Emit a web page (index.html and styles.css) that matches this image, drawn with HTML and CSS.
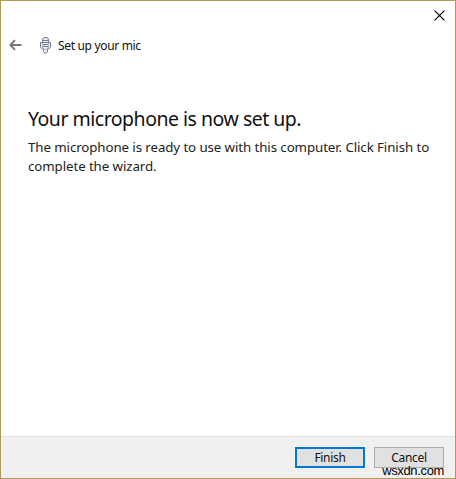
FILE: index.html
```html
<!DOCTYPE html>
<html lang="en">
<head>
<meta charset="utf-8">
<title>Set up your mic</title>
<link rel="stylesheet" href="styles.css">
</head>
<body>
<div class="window">
  <div class="titlebar">
    <svg class="close" width="11" height="11" viewBox="0 0 11 11"><path d="M.6.6l9.8 9.8M10.4.6L.6 10.4"/></svg>
  </div>
  <header class="header">
    <svg class="back" width="13" height="12" viewBox="0 0 13 12"><path d="M12.5 6H1.5M6 1.2L1.3 6L6 10.8"/></svg>
    <svg class="mic" width="11" height="17" viewBox="0 0 11 17">
      <rect x="2.5" y=".5" width="6" height="12" rx="2.5"/>
      <path d="M3 3.5h5M3 5.5h5M3 7.5h5M3 9.5h5M2.5 5.5h-2v4.5l2 2.5M8.5 5.5h2v4.5l-2 2.5M3.5 12.5v2l1 1.5h2l1-1.5v-2"/>
    </svg>
    <span class="title">Set up your mic</span>
  </header>
  <main class="content">
    <h1 class="heading">Your microphone is now set up.</h1>
    <p class="text">The microphone is ready to use with this computer. Click Finish to<br>complete the wizard.</p>
  </main>
  <footer class="footer">
    <button class="button primary">Finish</button>
    <button class="button">Cancel</button>
  </footer>
  <div class="watermark">wsxdn.com</div>
</div>
</body>
</html>
```
FILE: styles.css
```css
* { box-sizing: border-box; }
body { margin: 0; font-family: "Noto Sans", "Open Sans", sans-serif; color: #111; }
.window {
  position: relative;
  display: flex;
  flex-direction: column;
  height: 479px;
  border: 1px solid #b29a52;
  background: #fff;
}
.titlebar { display: flex; justify-content: flex-end; height: 30px; padding: 9px 10px 0 0; }
.close { stroke: #000; stroke-width: 1.2; fill: none; }
.header { display: flex; align-items: center; height: 28px; padding-left: 8px; }
.back { stroke: #777; stroke-width: 1.9; fill: none; }
.mic { margin-left: 18px; stroke: #747a90; stroke-width: 1; fill: #f0f1f6; }
.title { margin: 2px 0 0 7px; font-size: 12px; line-height: 16px; white-space: nowrap; letter-spacing: -.33px; }
.content { flex: 1; padding: 46px 0 0 27px; white-space: nowrap; }
.heading { margin: 0; font-size: 19.5px; line-height: 28px; font-weight: 400; letter-spacing: -.5px; }
.text { margin: 5px 0 0; font-size: 13.3px; line-height: 19px; letter-spacing: -.09px; color: #222; }
.footer {
  display: flex;
  justify-content: flex-end;
  gap: 9px;
  height: 42px;
  padding: 10px 11px 0 0;
  border-top: 1px solid #dfdfdf;
  background: #f0f0f0;
}
.button {
  width: 70px;
  height: 21px;
  padding: 0;
  border: 1px solid #adadad;
  background: #e1e1e1;
  color: #111;
  font: 12px/17px "Noto Sans", "Open Sans", sans-serif;
  letter-spacing: -.3px;
}
.primary { border: 2px solid #0078d7; }
.watermark {
  position: absolute;
  right: 11px;
  bottom: -1px;
  font: 13px/16px "Liberation Sans", sans-serif;
  letter-spacing: -.35px;
  color: #000;
}
```
